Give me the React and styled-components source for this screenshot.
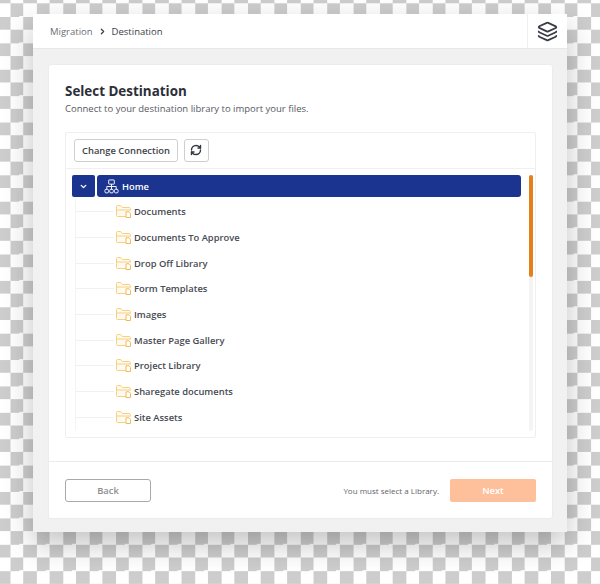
import styled, { createGlobalStyle } from 'styled-components';
import { ChevronDown, ChevronRight, Layers, RefreshCw } from 'lucide-react';

const libraries = [
  'Documents',
  'Documents To Approve',
  'Drop Off Library',
  'Form Templates',
  'Images',
  'Master Page Gallery',
  'Project Library',
  'Sharegate documents',
  'Site Assets',
];

const GlobalStyle = createGlobalStyle`
  html, body {
    margin: 0;
    height: 584px;
    overflow: hidden;
  }
  *, *::before, *::after {
    box-sizing: border-box;
  }
  body {
    font-family: "Open Sans", "Noto Sans", sans-serif;
    background-color: #fff;
    background-image: conic-gradient(#cdcdcd 25%, #fff 0 50%, #cdcdcd 0 75%, #fff 0);
    background-size: 26.4px 26.4px;
    background-position: -3.2px 3.3px;
  }
`;

const Page = styled.div`
  padding: 14px 33px 0 33px;
`;

const Window = styled.div`
  width: 534px;
  height: 518px;
  display: flex;
  flex-direction: column;
  background: #f1f1f1;
  box-shadow: 0 12px 28px rgba(0, 0, 0, 0.24);
`;

const Header = styled.header`
  height: 35px;
  flex: none;
  display: flex;
  align-items: center;
  background: #fff;
  border-bottom: 1px solid #e8e8e8;
`;

const Breadcrumb = styled.nav`
  flex: 1;
  display: flex;
  align-items: center;
  gap: 5px;
  padding-left: 17px;
  font-size: 9.5px;
  color: #6a6d75;
`;

const Current = styled.span`
  color: #3b3e46;
  font-weight: 500;
`;

const StackCell = styled.div`
  width: 40px;
  height: 100%;
  display: flex;
  align-items: center;
  justify-content: center;
  border-left: 1px solid #efefef;
  color: #3a3d45;
`;

const Card = styled.main`
  margin: 16px 15px 14px 16px;
  flex: 1;
  display: flex;
  flex-direction: column;
  background: #fff;
  border-radius: 2px;
  box-shadow: 0 0 2px rgba(0, 0, 0, 0.08);
`;

const Intro = styled.div`
  padding: 17px 16px 0;
`;

const Title = styled.h1`
  margin: 0;
  font-size: 13.4px;
  line-height: 19px;
  font-weight: 700;
  color: #2c2f38;
`;

const Subtitle = styled.p`
  margin: 1px 0 0;
  font-size: 9.5px;
  line-height: 14px;
  color: #565962;
`;

const Panel = styled.section`
  margin: 16px 16px 0;
  height: 306px;
  display: flex;
  flex-direction: column;
  border: 1px solid #efefef;
  border-radius: 2px;
`;

const Toolbar = styled.div`
  height: 36px;
  flex: none;
  display: flex;
  align-items: center;
  gap: 6px;
  padding: 0 0 1px 8px;
  border-bottom: 1px solid #f0f0f0;
`;

const ToolButton = styled.button`
  height: 23px;
  width: ${(p) => (p.$square ? '25px' : 'auto')};
  padding: ${(p) => (p.$square ? '0' : '0 7px')};
  display: flex;
  align-items: center;
  justify-content: center;
  background: #fff;
  border: 1px solid #cfcfcf;
  border-radius: 3px;
  font: 600 9.4px "Open Sans", sans-serif;
  color: #3f424a;
`;

const TreeArea = styled.div`
  flex: 1;
  min-height: 0;
  display: flex;
  padding: 6px 2px 0 6px;
  gap: 8px;
`;

const Tree = styled.div`
  flex: 1;
  min-width: 0;
`;

const RootRow = styled.div`
  display: flex;
  gap: 2px;
  height: 22px;
  margin-bottom: 2px;
`;

const Toggle = styled.div`
  width: 23px;
  display: flex;
  align-items: center;
  justify-content: center;
  background: #1a3490;
  border-radius: 2px;
  color: #fff;
`;

const RootLabel = styled.div`
  flex: 1;
  display: flex;
  align-items: center;
  gap: 3px;
  padding-left: 7px;
  background: #1a3490;
  border-radius: 3px;
  font-size: 9.3px;
  font-weight: 600;
  color: #fff;
`;

const Branch = styled.ul`
  list-style: none;
  margin: 0 0 0 3px;
  padding: 0;
  border-left: 1px solid #f4f4f4;
`;

const Leaf = styled.li`
  height: 25.7px;
  display: flex;
  align-items: center;
  font-size: 9.4px;
  font-weight: 600;
  color: #474a52;
`;

const Connector = styled.span`
  width: 38px;
  height: 1px;
  margin-right: 2px;
  background: #f0f0f0;
`;

const LeafName = styled.span`
  margin-left: 3px;
`;

const Scrollbar = styled.div`
  width: 4px;
  height: 256px;
  flex: none;
  background: #f4f4f4;
  border-radius: 2px;
`;

const ScrollThumb = styled.div`
  height: 102px;
  background: #e57f1c;
  border-radius: 2px;
`;

const Footer = styled.footer`
  margin-top: 23px;
  flex: 1;
  display: flex;
  align-items: center;
  padding: 1px 16px 0;
  border-top: 1px solid #ececec;
`;

const BackButton = styled.button`
  width: 86px;
  height: 23px;
  background: #fff;
  border: 1px solid #a9a9a9;
  border-radius: 3px;
  font: 600 9.4px "Open Sans", sans-serif;
  color: #8d8d8d;
`;

const Hint = styled.span`
  margin-left: auto;
  font-size: 8px;
  color: #5f6269;
`;

const NextButton = styled.button`
  width: 86px;
  height: 23px;
  margin-left: 11px;
  background: #fdc09a;
  border: 0;
  border-radius: 2px;
  font: 600 9.4px "Open Sans", sans-serif;
  color: #fff;
`;

const SiteIcon = () => (
  <svg width="15" height="15" viewBox="0 0 16 16" fill="none" stroke="#fff" strokeWidth="1">
    <rect x="5" y="1" width="6" height="4.5" rx="0.5" />
    <path d="M8 5.5V8M3 11V8h10v3M8 8v3" />
    <rect x="1" y="11" width="3.8" height="3.8" rx="1.2" />
    <rect x="6.1" y="11" width="3.8" height="3.8" rx="1.2" />
    <rect x="11.2" y="11" width="3.8" height="3.8" rx="1.2" />
  </svg>
);

const FolderIcon = () => (
  <svg width="15" height="13" viewBox="0 0 15 13" fill="none" stroke="#f7d07e" strokeWidth="1">
    <path d="M10 11.5H1.5a1 1 0 0 1-1-1V1.5a1 1 0 0 1 1-1h3.2l1.6 2h7a1 1 0 0 1 1 1v2" fill="#fffaf0" />
    <path d="M.5 5h14" />
    <path d="M10 6.8h3l1.5 1.5v4.2H10z" fill="#fff" stroke="#efbc57" />
  </svg>
);

const App = () => (
  <Page>
    <GlobalStyle />
    <Window>
      <Header>
        <Breadcrumb>
          <span>Migration</span>
          <ChevronRight size={9} strokeWidth={3.4} color="#3b3e46" />
          <Current>Destination</Current>
        </Breadcrumb>
        <StackCell>
          <Layers size={21} strokeWidth={2} />
        </StackCell>
      </Header>
      <Card>
        <Intro>
          <Title>Select Destination</Title>
          <Subtitle>Connect to your destination library to import your files.</Subtitle>
        </Intro>
        <Panel>
          <Toolbar>
            <ToolButton>Change Connection</ToolButton>
            <ToolButton $square>
              <RefreshCw size={12} strokeWidth={2.8} color="#33363e" />
            </ToolButton>
          </Toolbar>
          <TreeArea>
            <Tree>
              <RootRow>
                <Toggle>
                  <ChevronDown size={9} strokeWidth={3.6} />
                </Toggle>
                <RootLabel>
                  <SiteIcon />
                  Home
                </RootLabel>
              </RootRow>
              <Branch>
                {libraries.map((name) => (
                  <Leaf key={name}>
                    <Connector />
                    <FolderIcon />
                    <LeafName>{name}</LeafName>
                  </Leaf>
                ))}
              </Branch>
            </Tree>
            <Scrollbar>
              <ScrollThumb />
            </Scrollbar>
          </TreeArea>
        </Panel>
        <Footer>
          <BackButton>Back</BackButton>
          <Hint>You must select a Library.</Hint>
          <NextButton>Next</NextButton>
        </Footer>
      </Card>
    </Window>
  </Page>
);

export default App;
